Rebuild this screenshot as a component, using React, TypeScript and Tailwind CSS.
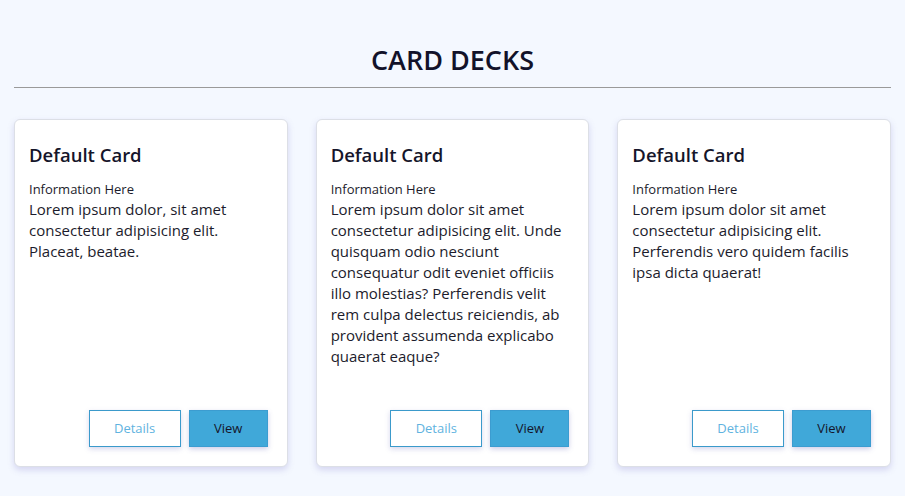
const cards = [
  {
    title: "Default Card",
    info: "Information Here",
    body: "Lorem ipsum dolor, sit amet consectetur adipisicing elit. Placeat, beatae.",
  },
  {
    title: "Default Card",
    info: "Information Here",
    body: "Lorem ipsum dolor sit amet consectetur adipisicing elit. Unde quisquam odio nesciunt consequatur odit eveniet officiis illo molestias? Perferendis velit rem culpa delectus reiciendis, ab provident assumenda explicabo quaerat eaque?",
  },
  {
    title: "Default Card",
    info: "Information Here",
    body: "Lorem ipsum dolor sit amet consectetur adipisicing elit. Perferendis vero quidem facilis ipsa dicta quaerat!",
  },
];

function Card(props: { title: string; info: string; body: string }) {
  return (
    <div className="flex flex-col h-[348px] bg-white border border-[#dcdfe6] rounded-md shadow-[0_3px_6px_rgba(120,110,200,0.25)] px-[14px] pt-[22px] pb-[19px]">
      <h2 className="text-[18.5px] font-semibold text-[#15152a] leading-[26px]">
        {props.title}
      </h2>
      <p className="mt-[12px] text-[13px] text-[#1c1c2c] leading-[18px]">
        {props.info}
      </p>
      <p className="mt-[1px] text-[15px] text-[#1c1c2c] leading-[21px]">{props.body}</p>
      <div className="mt-auto mr-[5px] flex justify-end gap-[8px]">
        <button className="w-[92px] h-[37px] border border-[#3b9acb] bg-white text-[13px] text-[#5fb3e0] shadow-[0_2px_5px_rgba(90,90,180,0.25)]">
          Details
        </button>
        <button className="w-[79px] h-[37px] border border-[#3c9cd0] bg-[#40a8d9] text-[13px] text-[#15152a] shadow-[0_2px_5px_rgba(90,90,180,0.3)]">
          View
        </button>
      </div>
    </div>
  );
}

export default function App() {
  return (
    <div
      className="min-h-[496px] bg-[#f4f8ff] px-[14px] pt-[40px]"
      style={{ fontFamily: "'Open Sans', sans-serif" }}
    >
      <h1 className="text-center text-[27px] font-semibold text-[#12122a] leading-[39px]">
        CARD DECKS
      </h1>
      <hr className="mt-[8px] border-t border-[#9a9a9a] mx-0" />
      <div className="mt-[31px] grid grid-cols-3 gap-[28px]">
        {cards.map((c, i) => (
          <Card key={i} title={c.title} info={c.info} body={c.body} />
        ))}
      </div>
    </div>
  );
}
